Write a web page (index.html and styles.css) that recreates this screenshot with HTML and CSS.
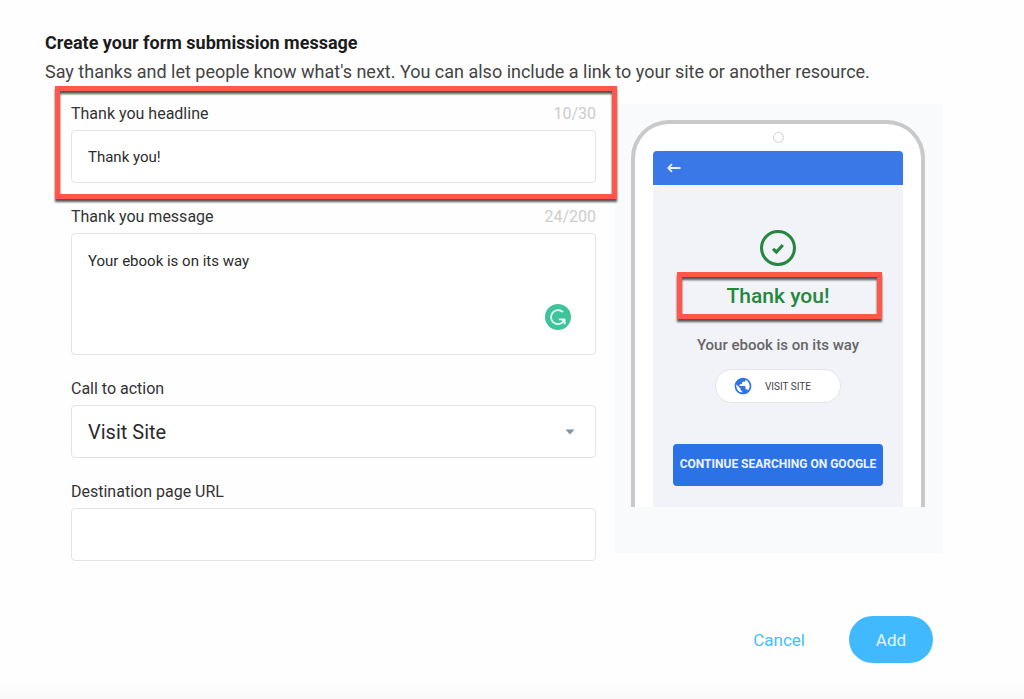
FILE: index.html
```html
<!DOCTYPE html>
<html lang="en">
<head>
    <meta charset="UTF-8">
    <meta name="viewport" content="width=device-width, initial-scale=1.0">
    <title>Form submission message</title>
    <link rel="stylesheet" href="styles.css">
</head>
<body>
    <form class="page">
        <header>
            <h1>Create your form submission message</h1>
            <p class="intro">Say thanks and let people know what's next. You can also include a link to your site or another resource.</p>
        </header>

        <div class="columns">
            <div class="fields">
                <div class="field highlight">
                    <div class="label-row">
                        <label for="headline">Thank you headline</label>
                        <span class="count">10/30</span>
                    </div>
                    <input type="text" id="headline" value="Thank you!" maxlength="30">
                </div>

                <div class="field">
                    <div class="label-row">
                        <label for="message">Thank you message</label>
                        <span class="count">24/200</span>
                    </div>
                    <div class="control">
                        <textarea id="message" maxlength="200">Your ebook is on its way</textarea>
                        <svg class="grammar" viewBox="0 0 26 26">
                            <circle cx="13" cy="13" r="13" fill="#3fc39b"/>
                            <path d="M18 8.2A7 7 0 1 0 18.5 17.5M13.8 15.3H19.6V20.2" fill="none" stroke="#e9fbf5" stroke-width="1.8"/>
                            <path d="M15.5 15H20V19.5Z" fill="#e9fbf5"/>
                        </svg>
                    </div>
                </div>

                <div class="field">
                    <div class="label-row">
                        <label for="action">Call to action</label>
                    </div>
                    <div class="control">
                        <select id="action">
                            <option>Visit Site</option>
                        </select>
                        <svg class="arrow" viewBox="0 0 10 6">
                            <path d="M0.5 0.5H9.5L5 5.5Z" fill="#8093a8"/>
                        </svg>
                    </div>
                </div>

                <div class="field">
                    <div class="label-row">
                        <label for="url">Destination page URL</label>
                    </div>
                    <input type="text" id="url">
                </div>
            </div>

            <div class="preview">
                <div class="phone">
                    <div class="camera"></div>
                    <div class="topbar">
                        <svg width="14" height="10" viewBox="0 0 14 10">
                            <path d="M13.5 5H1.5M5 1.2L1.2 5L5 8.8" fill="none" stroke="#e6eefc" stroke-width="1.8"/>
                        </svg>
                    </div>
                    <div class="screen">
                        <svg class="check" viewBox="0 0 36 36">
                            <circle cx="18" cy="18" r="16.5" fill="none" stroke="#25873d" stroke-width="3"/>
                            <path d="M13 18.8L16.4 22L22.8 15" fill="none" stroke="#25873d" stroke-width="3.2"/>
                        </svg>
                        <h2 class="highlight">Thank you!</h2>
                        <p class="sent">Your ebook is on its way</p>
                        <button type="button" class="visit">
                            <svg width="20" height="20" viewBox="0 0 24 24">
                                <path fill="#2f72e4" d="M12 2C6.48 2 2 6.48 2 12s4.48 10 10 10 10-4.48 10-10S17.52 2 12 2zm-1 17.93c-3.95-.49-7-3.85-7-7.93 0-.62.08-1.21.21-1.79L9 15v1c0 1.1.9 2 2 2v1.93zm6.9-2.54c-.26-.81-1-1.39-1.9-1.39h-1v-3c0-.55-.45-1-1-1H8v-2h2c.55 0 1-.45 1-1V7h2c1.1 0 2-.9 2-2v-.41c2.93 1.19 5 4.06 5 7.41 0 2.08-.8 3.97-2.1 5.39z"/>
                            </svg>
                            VISIT SITE
                        </button>
                        <button type="button" class="continue">CONTINUE SEARCHING ON GOOGLE</button>
                    </div>
                </div>
            </div>
        </div>

        <footer>
            <button type="button" class="cancel">Cancel</button>
            <button type="submit" class="add">Add</button>
        </footer>
    </form>
</body>
</html>
```
FILE: styles.css
```css
* {
    box-sizing: border-box;
}

body {
    margin: 0;
    min-height: 100vh;
    font-family: Roboto, sans-serif;
    color: #333;
    background: linear-gradient(to top, #f8f8f8, #fefefe 16px);
}

.page {
    padding: 29px 81px 36px 45px;
}

h1, h2, p {
    margin: 0;
}

h1 {
    font-size: 18px;
    line-height: 28px;
    font-weight: 700;
    color: #1c1c1c;
}

.intro {
    font-size: 18px;
    line-height: 30px;
    white-space: nowrap;
    color: #444;
}

input, textarea, select, button {
    font-family: inherit;
}

.columns {
    display: grid;
    grid-template-columns: 1fr 328px;
    gap: 19px;
    align-items: start;
    padding-top: 14px;
}

.fields {
    display: flex;
    flex-direction: column;
    gap: 21px;
    padding-left: 26px;
}

.field {
    display: flex;
    flex-direction: column;
    gap: 3px;
}

.label-row {
    display: flex;
    justify-content: space-between;
    font-size: 16px;
    line-height: 26px;
}

.count {
    color: #ccc;
}

input, textarea, select {
    display: block;
    width: 100%;
    height: 53px;
    padding: 0 16px;
    border: 1px solid #e4e4e4;
    border-radius: 4px;
    background: #fff;
    color: #2b2b2b;
    font-size: 15px;
    outline: none;
}

textarea {
    height: 122px;
    padding: 16px;
    line-height: 22px;
    resize: none;
}

select {
    appearance: none;
    font-size: 20px;
}

.control {
    position: relative;
}

.grammar {
    position: absolute;
    right: 25px;
    bottom: 25px;
    width: 26px;
    height: 26px;
}

.arrow {
    position: absolute;
    right: 21px;
    top: 24px;
    width: 10px;
    height: 6px;
    pointer-events: none;
}

/* red callout frames */
.highlight {
    position: relative;
}

.highlight::after {
    content: "";
    position: absolute;
    z-index: 1;
    inset: -15px -21px -16px -16px;
    border: 5px solid #ff584a;
    filter: drop-shadow(0 3px 1px #555);
    pointer-events: none;
}

h2.highlight::after {
    inset: 0 -2px 1px 1px;
}

.preview {
    margin-top: 3px;
    padding: 16px 18px 46px 16px;
    background: #f9fafc;
}

.phone {
    display: flex;
    flex-direction: column;
    align-items: center;
    height: 387px;
    padding: 8px 18px 0;
    border: 4px solid #c9c9c9;
    border-bottom: none;
    border-radius: 38px 38px 0 0;
    background: #fff;
}

.camera {
    width: 11px;
    height: 11px;
    border: 1px solid #d0d0d0;
    border-radius: 50%;
}

.topbar {
    display: flex;
    align-items: center;
    width: 100%;
    height: 34px;
    margin-top: 8px;
    padding-left: 14px;
    border-radius: 4px 4px 0 0;
    background: #3a78e7;
}

.screen {
    display: flex;
    flex: 1;
    flex-direction: column;
    align-items: center;
    width: 100%;
    padding: 45px 20px 0;
    border-radius: 8px 8px 0 0;
    background: #f1f3f8;
}

.check {
    width: 36px;
    height: 36px;
}

h2 {
    width: 204px;
    margin-top: 6px;
    font-size: 21px;
    line-height: 48px;
    font-weight: 500;
    text-align: center;
    color: #25873d;
}

.sent {
    margin-top: 13px;
    font-size: 15px;
    line-height: 24px;
    font-weight: 500;
    color: #666;
}

.visit {
    display: flex;
    align-items: center;
    gap: 12px;
    width: 126px;
    height: 34px;
    margin-top: 12px;
    padding: 0 17px;
    border: 1px solid #e4e6ea;
    border-radius: 17px;
    background: #fff;
    color: #444;
    font-size: 10px;
}

.continue {
    width: 210px;
    height: 42px;
    margin-top: 41px;
    padding: 0 0 2px;
    border: none;
    border-radius: 4px;
    background: #2b72e6;
    color: #eef4ff;
    font-size: 12px;
    font-weight: 700;
    white-space: nowrap;
}

footer {
    display: flex;
    justify-content: flex-end;
    gap: 24px;
    padding: 55px 10px 0 0;
}

.cancel, .add {
    height: 47px;
    padding: 0 20px;
    border: none;
    border-radius: 24px;
    background: none;
    color: #48bdfa;
    font-size: 17px;
}

.add {
    width: 84px;
    background: #41b9ff;
    color: #e4f5ff;
}
```
